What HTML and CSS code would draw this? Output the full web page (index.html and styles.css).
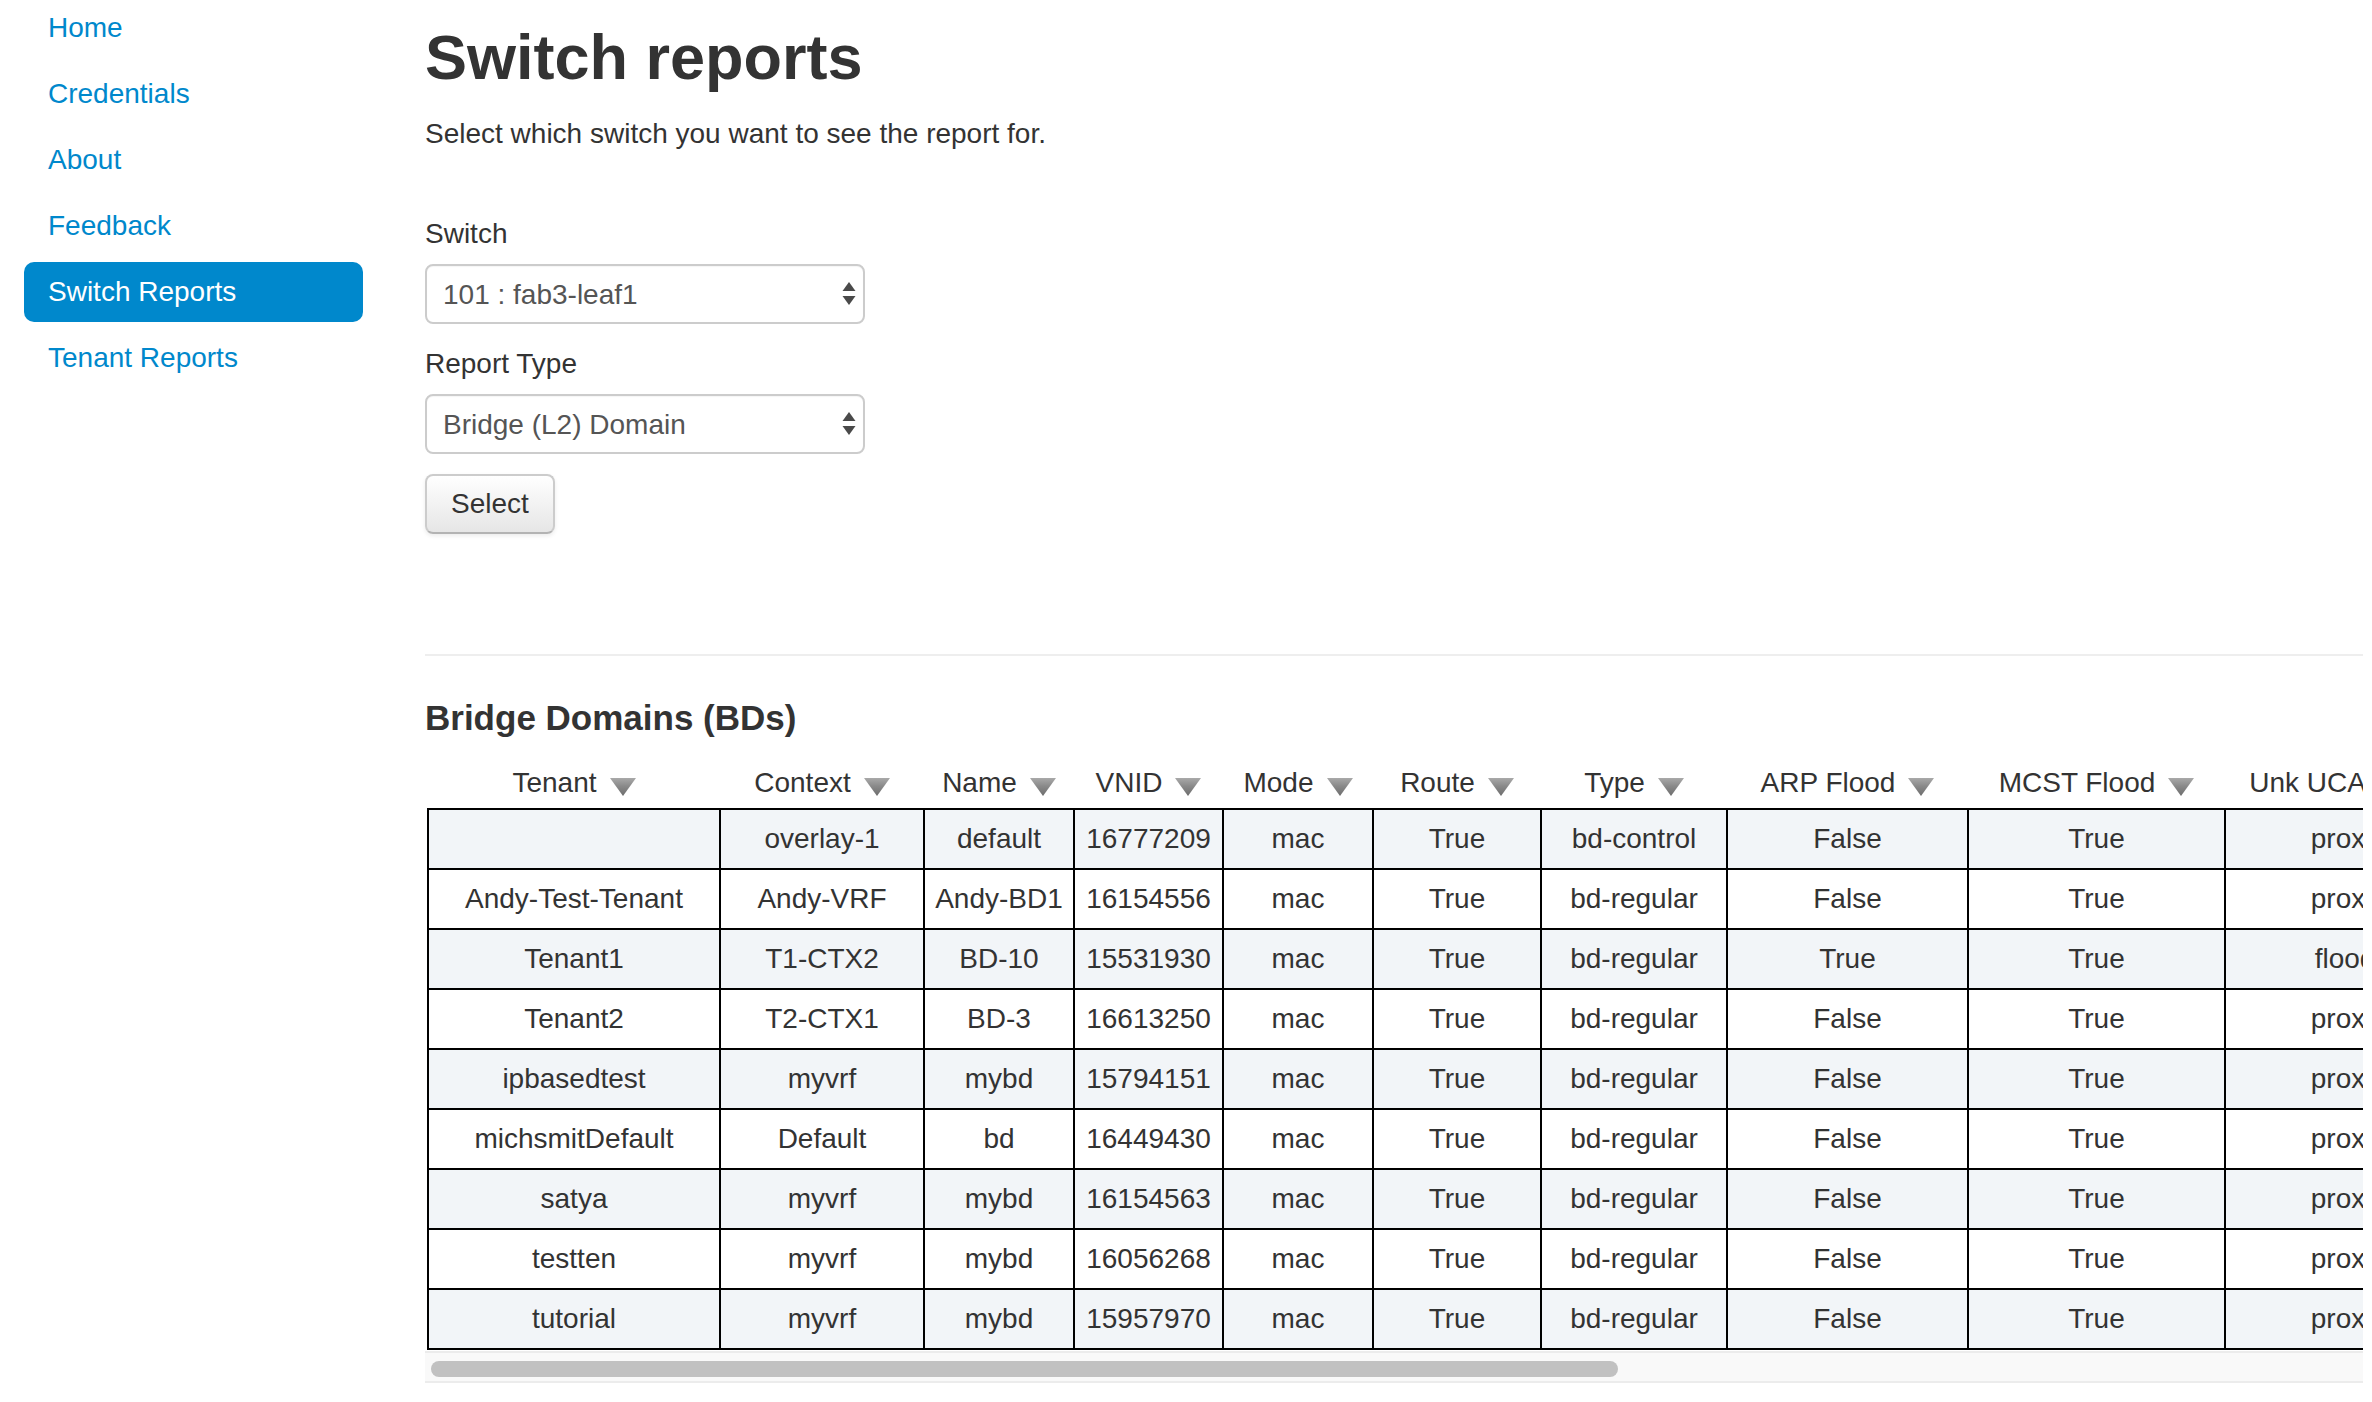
FILE: index.html
```html
<!DOCTYPE html>
<html lang="en">
<head>
<meta charset="utf-8">
<title>Switch reports</title>
<link rel="stylesheet" href="styles.css">
</head>
<body>
<svg class="defs" width="0" height="0" aria-hidden="true">
  <defs>
    <linearGradient id="sortgrad" x1="0" y1="0" x2="0" y2="1">
      <stop offset="0" stop-color="#a9a9a9"/>
      <stop offset="0.45" stop-color="#8a8a8a"/>
      <stop offset="1" stop-color="#6c6c6c"/>
    </linearGradient>
  </defs>
</svg>
<div class="layout">
  <nav class="sidebar">
    <ul class="nav">
      <li><a href="#">Home</a></li>
      <li><a href="#">Credentials</a></li>
      <li><a href="#">About</a></li>
      <li><a href="#">Feedback</a></li>
      <li class="active"><a href="#">Switch Reports</a></li>
      <li><a href="#">Tenant Reports</a></li>
    </ul>
  </nav>
  <main class="main">
    <h2 class="title">Switch reports</h2>
    <p class="lead">Select which switch you want to see the report for.</p>
    <form class="report-form">
      <label class="field-label" for="switch">Switch</label>
      <div class="select-wrap">
        <select id="switch" class="select">
          <option>101 : fab3-leaf1</option>
        </select>
        <svg class="select-arrows" width="14" height="24" viewBox="0 0 14 24"><polygon points="7,0 13.5,9 0.5,9" fill="#4a4a4a"/><polygon points="0.5,14 13.5,14 7,23" fill="#4a4a4a"/></svg>
      </div>
      <label class="field-label" for="rtype">Report Type</label>
      <div class="select-wrap">
        <select id="rtype" class="select">
          <option>Bridge (L2) Domain</option>
        </select>
        <svg class="select-arrows" width="14" height="24" viewBox="0 0 14 24"><polygon points="7,0 13.5,9 0.5,9" fill="#4a4a4a"/><polygon points="0.5,14 13.5,14 7,23" fill="#4a4a4a"/></svg>
      </div>
      <button type="button" class="btn">Select</button>
    </form>
    <hr class="divider">
    <h4 class="section-title">Bridge Domains (BDs)</h4>
    <div class="table-scroll">
      <table class="report">
        <colgroup>
          <col class="c-tenant"><col class="c-context"><col class="c-name"><col class="c-vnid"><col class="c-mode"><col class="c-route"><col class="c-type"><col class="c-arp"><col class="c-mcst"><col class="c-ucast">
        </colgroup>
        <thead>
          <tr>
            <th>Tenant<svg class="sort" viewBox="0 0 26 18"><polygon points="0,0 26,0 13,18" fill="url(#sortgrad)"/></svg></th>
            <th>Context<svg class="sort" viewBox="0 0 26 18"><polygon points="0,0 26,0 13,18" fill="url(#sortgrad)"/></svg></th>
            <th>Name<svg class="sort" viewBox="0 0 26 18"><polygon points="0,0 26,0 13,18" fill="url(#sortgrad)"/></svg></th>
            <th>VNID<svg class="sort" viewBox="0 0 26 18"><polygon points="0,0 26,0 13,18" fill="url(#sortgrad)"/></svg></th>
            <th>Mode<svg class="sort" viewBox="0 0 26 18"><polygon points="0,0 26,0 13,18" fill="url(#sortgrad)"/></svg></th>
            <th>Route<svg class="sort" viewBox="0 0 26 18"><polygon points="0,0 26,0 13,18" fill="url(#sortgrad)"/></svg></th>
            <th>Type<svg class="sort" viewBox="0 0 26 18"><polygon points="0,0 26,0 13,18" fill="url(#sortgrad)"/></svg></th>
            <th>ARP Flood<svg class="sort" viewBox="0 0 26 18"><polygon points="0,0 26,0 13,18" fill="url(#sortgrad)"/></svg></th>
            <th>MCST Flood<svg class="sort" viewBox="0 0 26 18"><polygon points="0,0 26,0 13,18" fill="url(#sortgrad)"/></svg></th>
            <th>Unk UCAST<svg class="sort" viewBox="0 0 26 18"><polygon points="0,0 26,0 13,18" fill="url(#sortgrad)"/></svg></th>
          </tr>
        </thead>
        <tbody>
          <tr><td></td><td>overlay-1</td><td>default</td><td>16777209</td><td>mac</td><td>True</td><td>bd-control</td><td>False</td><td>True</td><td>proxy</td></tr>
          <tr><td>Andy-Test-Tenant</td><td>Andy-VRF</td><td>Andy-BD1</td><td>16154556</td><td>mac</td><td>True</td><td>bd-regular</td><td>False</td><td>True</td><td>proxy</td></tr>
          <tr><td>Tenant1</td><td>T1-CTX2</td><td>BD-10</td><td>15531930</td><td>mac</td><td>True</td><td>bd-regular</td><td>True</td><td>True</td><td>flood</td></tr>
          <tr><td>Tenant2</td><td>T2-CTX1</td><td>BD-3</td><td>16613250</td><td>mac</td><td>True</td><td>bd-regular</td><td>False</td><td>True</td><td>proxy</td></tr>
          <tr><td>ipbasedtest</td><td>myvrf</td><td>mybd</td><td>15794151</td><td>mac</td><td>True</td><td>bd-regular</td><td>False</td><td>True</td><td>proxy</td></tr>
          <tr><td>michsmitDefault</td><td>Default</td><td>bd</td><td>16449430</td><td>mac</td><td>True</td><td>bd-regular</td><td>False</td><td>True</td><td>proxy</td></tr>
          <tr><td>satya</td><td>myvrf</td><td>mybd</td><td>16154563</td><td>mac</td><td>True</td><td>bd-regular</td><td>False</td><td>True</td><td>proxy</td></tr>
          <tr><td>testten</td><td>myvrf</td><td>mybd</td><td>16056268</td><td>mac</td><td>True</td><td>bd-regular</td><td>False</td><td>True</td><td>proxy</td></tr>
          <tr><td>tutorial</td><td>myvrf</td><td>mybd</td><td>15957970</td><td>mac</td><td>True</td><td>bd-regular</td><td>False</td><td>True</td><td>proxy</td></tr>
        </tbody>
      </table>
    </div>
    <div class="hscroll"><div class="hscroll-thumb"></div></div>
  </main>
</div>
</body>
</html>
```

FILE: styles.css
```css
* { box-sizing: border-box; }

html, body {
  margin: 0;
  padding: 0;
  background: #ffffff;
}

body {
  font-family: "Liberation Sans", Arial, Helvetica, sans-serif;
  font-size: 28px;
  line-height: 40px;
  color: #333333;
}

.defs {
  position: absolute;
  width: 0;
  height: 0;
  overflow: hidden;
}

.layout {
  display: flex;
  align-items: flex-start;
}

/* Sidebar navigation */
.sidebar {
  flex: 0 0 363px;
  padding-left: 24px;
}

.nav {
  list-style: none;
  margin: -2px 0 0;
  padding: 0;
}

.nav li {
  margin-bottom: 6px;
}

.nav a {
  display: block;
  padding: 16px 24px;
  line-height: 28px;
  font-size: 28px;
  color: #0088cc;
  text-decoration: none;
  border-radius: 10px;
}

.nav .active a {
  background: #0088cc;
  color: #ffffff;
}

/* Main */
.main {
  flex: 1 1 auto;
  min-width: 0;
  margin-left: 62px;
  margin-right: 9px;
}

.title {
  margin: 17px 0 17px;
  font-size: 63px;
  line-height: 80px;
  font-weight: bold;
  color: #333333;
}

.lead {
  margin: 0;
  font-size: 28px;
  line-height: 40px;
}

.report-form {
  margin-top: 60px;
}

.field-label {
  display: block;
  margin-bottom: 10px;
  line-height: 40px;
}

.select-wrap {
  position: relative;
  width: 440px;
  margin-bottom: 20px;
}

.select {
  display: block;
  width: 440px;
  height: 60px;
  margin: 0;
  padding: 0 16px;
  border: 2px solid #cccccc;
  border-radius: 8px;
  background: #ffffff;
  color: #555555;
  font-family: "Liberation Sans", Arial, Helvetica, sans-serif;
  font-size: 28px;
  -webkit-appearance: none;
  appearance: none;
  box-shadow: inset 0 1px 1px rgba(0,0,0,0.04);
}

.select-arrows {
  position: absolute;
  right: 9px;
  top: 18px;
  pointer-events: none;
}

.btn {
  display: block;
  height: 60px;
  margin: 0;
  padding: 8px 24px;
  font-family: "Liberation Sans", Arial, Helvetica, sans-serif;
  font-size: 28px;
  line-height: 40px;
  color: #333333;
  background: linear-gradient(to bottom, #ffffff, #e6e6e6);
  border: 2px solid #cccccc;
  border-bottom-color: #b3b3b3;
  border-radius: 8px;
  box-shadow: inset 0 2px 0 rgba(255,255,255,0.2), 0 2px 4px rgba(0,0,0,0.08);
}

.divider {
  margin: 120px 0 0;
  height: 0;
  border: 0;
  border-top: 2px solid #eeeeee;
}

.section-title {
  margin: 42px 0 12px;
  font-size: 35px;
  line-height: 40px;
  font-weight: bold;
  color: #333333;
}

/* Table */
.table-scroll {
  overflow: hidden;
  padding-bottom: 1px;
}

.report {
  table-layout: fixed;
  width: 2037px;
  margin-left: 2px;
  border-collapse: collapse;
  font-size: 28px;
  color: #333333;
}

.c-tenant { width: 292px; }
.c-context { width: 204px; }
.c-name { width: 150px; }
.c-vnid { width: 149px; }
.c-mode { width: 150px; }
.c-route { width: 168px; }
.c-type { width: 186px; }
.c-arp { width: 241px; }
.c-mcst { width: 257px; }
.c-ucast { width: 240px; }

.report th {
  padding: 13px 4px 5px;
  line-height: 40px;
  font-weight: normal;
  text-align: center;
  white-space: nowrap;
  border: 0;
}

.sort {
  display: inline-block;
  width: 26px;
  height: 18px;
  margin-left: 13px;
  vertical-align: -4px;
}

.report td {
  padding: 9px 4px;
  line-height: 40px;
  text-align: center;
  white-space: nowrap;
  border: 2px solid #000000;
}

.report tbody tr:nth-child(odd) td {
  background: #f2f5f8;
}

/* Horizontal scroll indicator */
.hscroll {
  height: 32px;
  padding-top: 8px;
  background: #f9f9f9;
  border-top: 2px solid #ececec;
  border-bottom: 2px solid #ececec;
}

.hscroll-thumb {
  width: 1187px;
  height: 16px;
  margin-left: 6px;
  background: #c1c1c1;
  border-radius: 8px;
}
```
